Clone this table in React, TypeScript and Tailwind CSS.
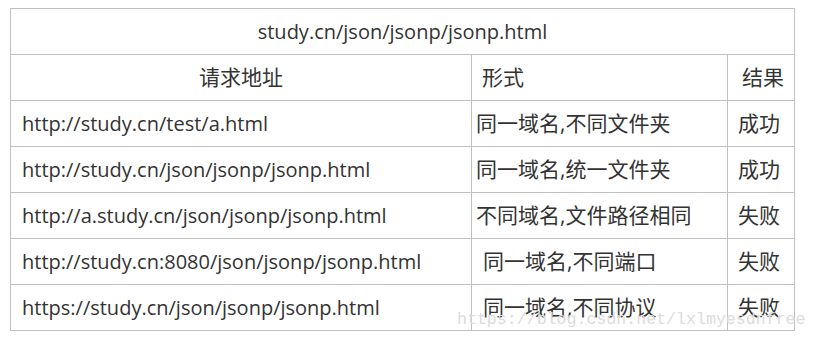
const rows = [
  { url: "http://study.cn/test/a.html", form: "同一域名,不同文件夹", result: "成功", indent: false },
  { url: "http://study.cn/json/jsonp/jsonp.html", form: "同一域名,统一文件夹", result: "成功", indent: false },
  { url: "http://a.study.cn/json/jsonp/jsonp.html", form: "不同域名,文件路径相同", result: "失败", indent: false },
  { url: "http://study.cn:8080/json/jsonp/jsonp.html", form: "同一域名,不同端口", result: "失败", indent: true },
  { url: "https://study.cn/json/jsonp/jsonp.html", form: "同一域名,不同协议", result: "失败", indent: true },
];

export default function App() {
  return (
    <div className="relative w-[819px] h-[350px] bg-white pt-[8px] pl-[10px] text-[#333] font-['Open_Sans','Noto_Sans_CJK_SC',sans-serif] text-[20px]">
      <table className="border-collapse table-fixed w-[784px]">
        <colgroup>
          <col className="w-[461px]" />
          <col className="w-[256px]" />
          <col className="w-[67px]" />
        </colgroup>
        <tbody>
          <tr className="h-[46px]">
            <td colSpan={3} className="border border-[#c0c0c0] text-center p-0">
              study.cn/json/jsonp/jsonp.html
            </td>
          </tr>
          <tr className="h-[46px] text-[21px]">
            <td className="border border-[#c0c0c0] text-center p-0">请求地址</td>
            <td className="border border-[#c0c0c0] pl-[10px] p-0">形式</td>
            <td className="border border-[#c0c0c0] pl-[14px] p-0">结果</td>
          </tr>
          {rows.map((r) => (
            <tr key={r.url} className="h-[46px]">
              <td className="border border-[#c0c0c0] pl-[11px] p-0">{r.url}</td>
              <td className={`border border-[#c0c0c0] p-0 text-[21px] ${r.indent ? "pl-[11px]" : "pl-[4px]"}`}>{r.form}</td>
              <td className="border border-[#c0c0c0] pl-[10px] p-0 text-[21px]">{r.result}</td>
            </tr>
          ))}
        </tbody>
      </table>
      <div className="absolute left-[457px] top-[312px] font-['Liberation_Mono',monospace] text-[16.6px] text-[#dcdcdc] leading-none">
        https://blog.csdn.net/lxlmyesdnfree
      </div>
    </div>
  );
}
